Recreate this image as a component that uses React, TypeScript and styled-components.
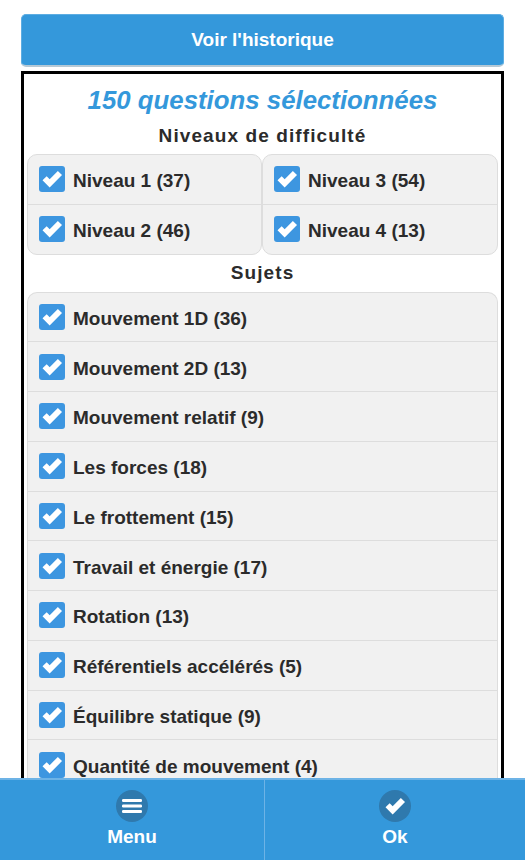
import styled, { createGlobalStyle } from "styled-components";

const GlobalStyle = createGlobalStyle`
  html, body {
    margin: 0;
    padding: 0;
    height: 860px;
    overflow: hidden;
    background: #fff;
    font-family: "Liberation Sans", Arial, sans-serif;
  }
`;

const Page = styled.div`
  padding: 14px 21px 0;
`;

const HistoryButton = styled.button`
  display: block;
  width: 100%;
  height: 53px;
  box-sizing: border-box;
  background: #3498db;
  border: 1px solid #5dade2;
  border-bottom: 2px solid #b5c9d6;
  border-radius: 5px;
  color: #fff;
  font: bold 19px "Liberation Sans", Arial, sans-serif;
  cursor: pointer;
`;

const Panel = styled.div`
  margin-top: 4px;
  border: 3px solid #000;
  padding: 0 3px;
`;

const Title = styled.h2`
  margin: 0;
  padding-top: 11px;
  text-align: center;
  color: #3498db;
  font-size: 25.8px;
  line-height: 30px;
  font-style: italic;
  font-weight: bold;
`;

const Heading = styled.h3<{ $top: number }>`
  margin: ${(p) => p.$top}px 0 0;
  height: 24px;
  text-align: center;
  color: #2b2b2b;
  font-size: 19px;
  line-height: 24px;
  font-weight: bold;
  letter-spacing: 1.1px;
`;

const LevelColumns = styled.div`
  display: grid;
  grid-template-columns: 235px 1fr;
  margin-top: 6px;
`;

const Group = styled.div`
  border: 1px solid #ddd;
  border-radius: 10px;
  overflow: hidden;
  background: #f1f1f1;
`;

const SubjectList = styled(Group)`
  margin-top: 7px;
  border-bottom: none;
  border-bottom-left-radius: 0;
  border-bottom-right-radius: 0;
`;

const Row = styled.label`
  display: flex;
  align-items: center;
  gap: 8px;
  height: 48.75px;
  box-sizing: border-box;
  padding: 0 11px;
  color: #2b2b2b;
  font-size: 19px;
  font-weight: bold;
  & + & {
    height: 49.75px;
    border-top: 1px solid #ddd;
  }
`;

const RowText = styled.span`
  padding-top: 4px;
`;

const Box = styled.span`
  flex: none;
  width: 26px;
  height: 26px;
  border-radius: 3px;
  background: #3d96e0;
  display: flex;
  align-items: center;
  justify-content: center;
`;

const Footer = styled.nav`
  position: fixed;
  left: 0;
  right: 0;
  bottom: 0;
  height: 82px;
  box-sizing: border-box;
  background: #3498db;
  border-top: 2px solid #6db3e6;
  display: grid;
  grid-template-columns: 264px 1fr;
`;

const FooterItem = styled.button<{ $divider?: boolean }>`
  padding: 10px 0 0;
  background: none;
  border: none;
  border-left: ${(p) => (p.$divider ? "1px solid #6db3e6" : "none")};
  color: #fff;
  font: bold 19px "Liberation Sans", Arial, sans-serif;
  display: flex;
  flex-direction: column;
  align-items: center;
  gap: 4px;
  cursor: pointer;
`;

const Round = styled.span`
  width: 32px;
  height: 32px;
  border-radius: 50%;
  background: #2f79ad;
  display: flex;
  align-items: center;
  justify-content: center;
`;

const Check = ({ size }: { size: number }) => (
  <svg width={size} height={size} viewBox="0 0 20 20">
    <path d="M2.7 11 L5.9 7.8 L8.2 10.1 L14.5 3.8 L17.7 7 L8.2 16.5 Z" fill="#fff" />
  </svg>
);

const Burger = () => (
  <svg width="22" height="18" viewBox="0 0 22 18">
    <rect x="1" y="2" width="20" height="3" rx="1.2" fill="#fff" />
    <rect x="1" y="7.5" width="20" height="3" rx="1.2" fill="#fff" />
    <rect x="1" y="13" width="20" height="3" rx="1.2" fill="#fff" />
  </svg>
);

const Item = ({ label }: { label: string }) => (
  <Row>
    <Box>
      <Check size={26} />
    </Box>
    <RowText>{label}</RowText>
  </Row>
);

const subjects = [
  "Mouvement 1D (36)",
  "Mouvement 2D (13)",
  "Mouvement relatif (9)",
  "Les forces (18)",
  "Le frottement (15)",
  "Travail et énergie (17)",
  "Rotation (13)",
  "Référentiels accélérés (5)",
  "Équilibre statique (9)",
  "Quantité de mouvement (4)",
  "Gravitation (6)",
];

const App = () => {
  return (
    <>
      <GlobalStyle />
      <Page>
        <HistoryButton>Voir l'historique</HistoryButton>
        <Panel>
          <Title>150 questions sélectionnées</Title>
          <Heading $top={9}>Niveaux de difficulté</Heading>
          <LevelColumns>
            <Group>
              <Item label="Niveau 1 (37)" />
              <Item label="Niveau 2 (46)" />
            </Group>
            <Group>
              <Item label="Niveau 3 (54)" />
              <Item label="Niveau 4 (13)" />
            </Group>
          </LevelColumns>
          <Heading $top={6}>Sujets</Heading>
          <SubjectList>
            {subjects.map((s) => (
              <Item key={s} label={s} />
            ))}
          </SubjectList>
        </Panel>
      </Page>
      <Footer>
        <FooterItem>
          <Round>
            <Burger />
          </Round>
          Menu
        </FooterItem>
        <FooterItem $divider>
          <Round>
            <Check size={26} />
          </Round>
          Ok
        </FooterItem>
      </Footer>
    </>
  );
};

export default App;
